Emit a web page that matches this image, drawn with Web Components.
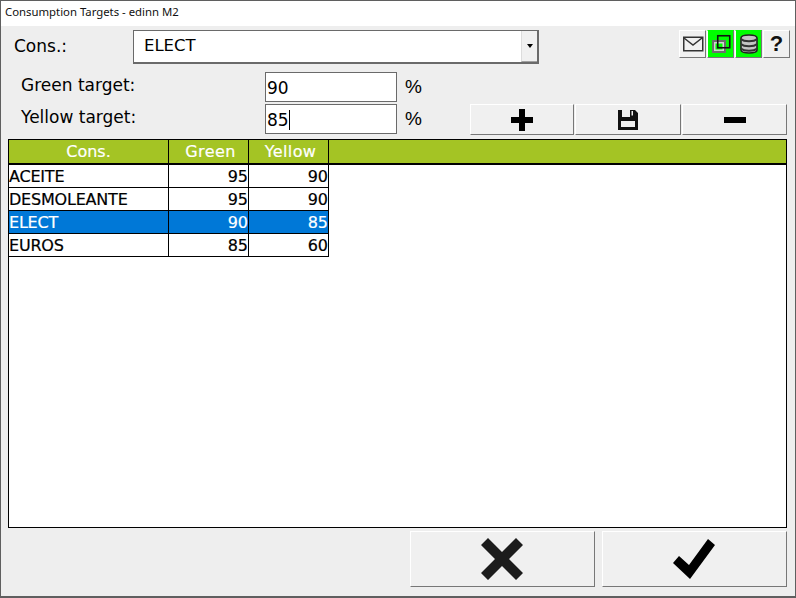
<!DOCTYPE html>
<html lang="en">
  <head>
    <meta charset="UTF-8" />
    <title>Consumption Targets</title>
    <style>
      html, body { margin: 0; padding: 0; background: #eeeeee; }
      body { font-family: "DejaVu Sans", sans-serif; }
    </style>
  </head>
  <body>
    <app-window caption="Consumption Targets - edinn M2">
      <top-row slot="top">
        <combo-field label="Cons.:" value="ELECT"></combo-field>
        <tool-strip slot="tools"></tool-strip>
      </top-row>
      <target-row slot="targets" label="Green target:" value="90"></target-row>
      <target-row slot="targets" label="Yellow target:" value="85" focused>
        <edit-buttons></edit-buttons>
      </target-row>
      <data-grid slot="grid"></data-grid>
      <dialog-buttons slot="bottom"></dialog-buttons>
    </app-window>

    <script>
      class AppWindow extends HTMLElement {
        constructor() {
          super();
          this.attachShadow({ mode: "open" });
          this.shadowRoot.innerHTML = `
            <style>
              :host { display: flex; flex-direction: column; box-sizing: border-box; width: 796px; height: 598px; border: 1px solid #5f5f5f; border-bottom-width: 2px; background: #eeeeee; overflow: hidden; }
              .title { height: 25px; flex: none; background: #fff; font: 11.35px/22px "Noto Sans", sans-serif; padding-left: 4px; color: #111; }
              .targets { display: flex; flex-direction: column; gap: 2px; margin-top: 8px; }
              .grid { flex: none; margin: 5px 8px 0 7px; }
              .bottom { flex: none; margin: 3px 8px 0 0; }
            </style>
            <div class="title"></div>
            <slot name="top"></slot>
            <div class="targets"><slot name="targets"></slot></div>
            <div class="grid"><slot name="grid"></slot></div>
            <div class="bottom"><slot name="bottom"></slot></div>`;
          this.shadowRoot.querySelector(".title").textContent = this.getAttribute("caption");
        }
      }

      class TopRow extends HTMLElement {
        constructor() {
          super();
          this.attachShadow({ mode: "open" });
          this.shadowRoot.innerHTML = `
            <style>
              :host { display: flex; justify-content: space-between; padding-top: 4px; height: 34px; }
            </style>
            <slot></slot><slot name="tools"></slot>`;
        }
      }

      class ComboField extends HTMLElement {
        constructor() {
          super();
          this.attachShadow({ mode: "open" });
          this.shadowRoot.innerHTML = `
            <style>
              :host { display: flex; align-items: center; font: 17px "DejaVu Sans", sans-serif; color: #000; }
              .label { width: 119px; padding-left: 13px; margin-top: -3px; }
              .box { display: flex; box-sizing: border-box; width: 406px; height: 34px; border: 1px solid #6a6a6a; border-right: 2px solid #6a6a6a; border-bottom: 2px solid #6a6a6a; background: #fff; }
              .value { flex: 1; padding: 5px 0 0 10px; font-size: 16.5px; }
              .arrow { width: 15px; background: #f0f0f0; border-left: 1px solid #dcdcdc; border-bottom: 1px solid #a0a0a0; display: flex; align-items: center; justify-content: center; }
              .arrow i { width: 0; height: 0; border: 3.5px solid transparent; border-top: 4px solid #000; border-bottom: 0; }
            </style>
            <span class="label"></span>
            <div class="box"><span class="value"></span><span class="arrow"><i></i></span></div>`;
          this.shadowRoot.querySelector(".label").textContent = this.getAttribute("label");
          this.shadowRoot.querySelector(".value").textContent = this.getAttribute("value");
        }
      }

      class ToolStrip extends HTMLElement {
        constructor() {
          super();
          this.attachShadow({ mode: "open" });
          this.shadowRoot.innerHTML = `
            <style>
              :host { display: flex; gap: 1px; height: 28px; margin-right: 5px; }
              .b { box-sizing: border-box; width: 27px; height: 28px; background: #f0f0f0; border: 1px solid; border-color: #fff #777 #777 #fff; display: flex; align-items: center; justify-content: center; font: bold 22px "Liberation Sans", sans-serif; color: #111; }
              .b:first-child { width: 28px; }
              .on { background: #00ff00; border-color: #00ff00 #777 #777 #fff; }
              svg { display: block; flex: none; }
            </style>
            <div class="b"><svg width="22" height="16" viewBox="0 0 22 16" fill="none" stroke="#333" stroke-width="1.5"><rect x="1.75" y="1.25" width="19" height="13.5"/><path d="M2 2l9 7 9-7"/></svg></div>
            <div class="b on"><svg width="20" height="20" viewBox="0 0 20 20" fill="none"><rect x="2" y="7" width="12" height="11" stroke="#6e6e6e" stroke-width="2"/><rect x="3.75" y="8.75" width="8.5" height="7.5" stroke="#d4d4d4" stroke-width="1.5"/><rect x="6.75" y="1.75" width="12" height="12" stroke="#111" stroke-width="1.6"/></svg></div>
            <div class="b on"><svg width="20" height="20" viewBox="0 0 20 20"><path d="M2 4c0-4 16-4 16 0v12c0 4-16 4-16 0z" fill="#c4c4c4" stroke="#222" stroke-width="1.6"/><path d="M2 5c3 3 13 3 16 0M2 10c3 3 13 3 16 0M2 14.5c3 3 13 3 16 0" fill="none" stroke="#333" stroke-width="1.8"/></svg></div>
            <div class="b">?</div>`;
        }
      }

      class TargetRow extends HTMLElement {
        constructor() {
          super();
          this.attachShadow({ mode: "open" });
          this.shadowRoot.innerHTML = `
            <style>
              :host { display: flex; align-items: center; height: 30px; font: 17px "DejaVu Sans", sans-serif; color: #000; }
              .label { width: 244px; padding-left: 20px; margin-top: -5px; }
              .input { box-sizing: border-box; width: 132px; height: 30px; border: 1px solid #6a6a6a; background: #fff; padding: 2px 0 0 1px; display: flex; align-items: center; }
              .caret { width: 1px; height: 20px; background: #000; display: none; }
              :host([focused]) .caret { display: block; }
              .pct { width: 73px; padding-left: 8px; box-sizing: border-box; font-family: "Liberation Sans", sans-serif; font-size: 19px; }
            </style>
            <span class="label"></span>
            <div class="input"><span class="value"></span><i class="caret"></i></div>
            <span class="pct">%</span>
            <slot></slot>`;
          this.shadowRoot.querySelector(".label").textContent = this.getAttribute("label");
          this.shadowRoot.querySelector(".value").textContent = this.getAttribute("value");
        }
      }

      class EditButtons extends HTMLElement {
        constructor() {
          super();
          this.attachShadow({ mode: "open" });
          this.shadowRoot.innerHTML = `
            <style>
              :host { display: flex; gap: 1px; align-self: flex-start; }
              .b { box-sizing: border-box; height: 31px; width: 105px; background: #f0f0f0; border: 1px solid; border-color: #fff #777 #777 #fff; display: flex; align-items: center; justify-content: center; }
              .b:nth-child(2) { width: 104px; }
              .b:nth-child(3) { width: 106px; }
              .b:first-child svg { margin-left: 1px; }
              svg { display: block; }
            </style>
            <div class="b"><svg width="22" height="22" viewBox="0 0 22 22"><path d="M8 0h6v8h8v6h-8v8H8v-8H0V8h8z" fill="#000"/></svg></div>
            <div class="b"><svg width="20" height="20" viewBox="0 0 20 20"><path fill="#111" fill-rule="evenodd" d="M0 0h4v7h8V0h5l3 3v17H0zM3 11v6h14v-6zM13.5 1v4.5h1.5V1z"/></svg></div>
            <div class="b"><svg width="22" height="6" viewBox="0 0 22 6"><rect width="22" height="6" fill="#000"/></svg></div>`;
        }
      }

      class DataGrid extends HTMLElement {
        constructor() {
          super();
          this.attachShadow({ mode: "open" });
          const rows = [
            ["ACEITE", "95", "90"],
            ["DESMOLEANTE", "95", "90"],
            ["ELECT", "90", "85"],
            ["EUROS", "85", "60"],
          ];
          const body = rows.map((r, i) => `
            <div class="row ${i === 2 ? "sel" : ""}">
              <span class="c name">${r[0]}</span><span class="c num">${r[1]}</span><span class="c num">${r[2]}</span>
            </div>`).join("");
          this.shadowRoot.innerHTML = `
            <style>
              :host { display: block; box-sizing: border-box; height: 389px; border: 1px solid #000; background: #fff; font: 16px "DejaVu Sans", sans-serif; color: #000; -webkit-text-stroke: 0.2px currentColor; }
              .head { display: grid; grid-template-columns: 160px 80px 80px 1fr; height: 23px; background: #a4c424; border-bottom: 2px solid #000; color: #fff; }
              .head span { border-right: 1px solid #000; text-align: center; line-height: 23px; }
              .head span:nth-child(2), .head span:nth-child(3) { padding-left: 4px; letter-spacing: 0.4px; }
              .head span:last-child { border-right: 0; }
              .row { display: grid; grid-template-columns: 160px 80px 80px; width: 320px; height: 23px; box-sizing: border-box; }
              .c { box-sizing: border-box; border-right: 1px solid #000; border-bottom: 1px solid #000; line-height: 23px; white-space: nowrap; overflow: hidden; }
              .name { letter-spacing: -0.2px; }
              .num { text-align: right; }
              .sel { background: #0078d7; color: #fff; }
            </style>
            <div class="head"><span>Cons.</span><span>Green</span><span>Yellow</span><span></span></div>
            ${body}`;
        }
      }

      class DialogButtons extends HTMLElement {
        constructor() {
          super();
          this.attachShadow({ mode: "open" });
          this.shadowRoot.innerHTML = `
            <style>
              :host { display: flex; justify-content: flex-end; gap: 7px; }
              .b { box-sizing: border-box; width: 185px; height: 56px; background: #f0f0f0; border: 1px solid; border-color: #fff #777 #777 #fff; display: flex; align-items: center; justify-content: center; }
              svg { display: block; }
            </style>
            <div class="b"><svg width="42" height="42" viewBox="0 0 42 42" style="margin-right:1px"><path d="M7 0l14 14L35 0l7 7-14 14 14 14-7 7-14-14L7 42l-7-7 14-14L0 7z" fill="#1c1c1c"/></svg></div>
            <div class="b"><svg width="42" height="40" viewBox="0 0 42 40" style="margin-right:1px"><path d="M35 0l7 6-25 34L0 24l6-7 10 9z" fill="#000"/></svg></div>`;
        }
      }

      customElements.define("app-window", AppWindow);
      customElements.define("top-row", TopRow);
      customElements.define("combo-field", ComboField);
      customElements.define("tool-strip", ToolStrip);
      customElements.define("target-row", TargetRow);
      customElements.define("edit-buttons", EditButtons);
      customElements.define("data-grid", DataGrid);
      customElements.define("dialog-buttons", DialogButtons);
    </script>
  </body>
</html>
